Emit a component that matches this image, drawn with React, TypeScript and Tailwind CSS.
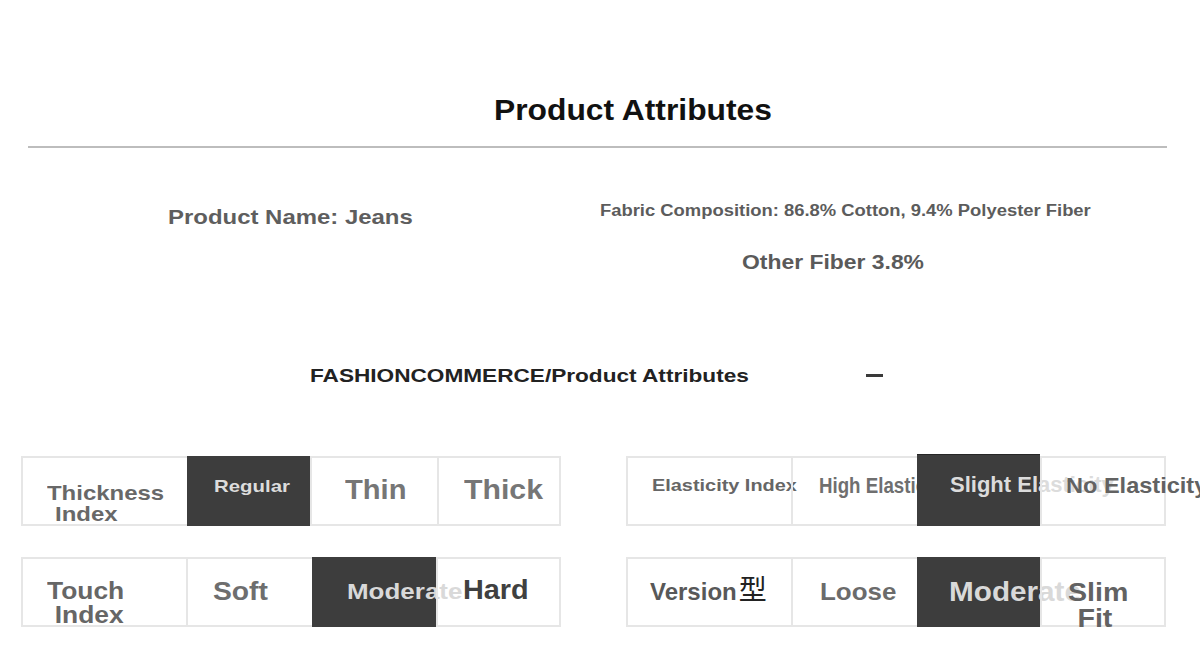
import React from "react"

function Cell({ className, children }: { className: string; children?: React.ReactNode }) {
  return <div className={"relative shrink-0 " + className}>{children}</div>
}

function Label({ className, children }: { className: string; children: React.ReactNode }) {
  return <div className={"w-fit whitespace-nowrap origin-left leading-none " + className}>{children}</div>
}

export default function App() {
  return (
    <div className="w-[1200px] h-[657px] overflow-hidden bg-white pt-[95px] font-['Liberation_Sans',Arial,sans-serif] font-bold">
      {/* heading */}
      <Label className="ml-[494px] text-[30px] scale-x-[1.06] text-[#111]">Product Attributes</Label>
      <div className="ml-[28px] mt-[21px] h-[2px] w-[1139px] bg-[#bdbdbd]" />

      {/* name / composition */}
      <div className="flex">
        <div className="w-[600px] shrink-0">
          <Label className="ml-[168px] mt-[58px] text-[21px] scale-x-[1.14] text-[#5e5e5e]">Product Name: Jeans</Label>
        </div>
        <div className="flex flex-col">
          <Label className="mt-[55px] text-[16px] scale-x-[1.15] text-[#5c5c5c]">
            Fabric Composition: 86.8% Cotton, 9.4% Polyester Fiber
          </Label>
          <Label className="ml-[142px] mt-[33px] text-[20px] scale-x-[1.145] text-[#5a5a5a]">Other Fiber 3.8%</Label>
        </div>
      </div>

      {/* section header */}
      <div className="flex items-center mt-[94px]">
        <div className="ml-[310px] w-[556px] shrink-0">
          <Label className="text-[19px] scale-x-[1.19] text-[#222]">FASHIONCOMMERCE/Product Attributes</Label>
        </div>
        <div className="h-[3px] w-[17px] bg-[#3a3a3a]" />
      </div>

      {/* attribute tables */}
      <div className="ml-[21px] mt-[71px] flex gap-[65px]">
        <div className="flex h-[70px] w-[540px] shrink-0 border-2 border-[#e6e6e6]">
          <Cell className="w-[164px]">
            <Label className="ml-[24px] mt-[24px] text-[21px] leading-[19px] scale-x-[1.14] text-[#686868]">
              <div>Thickness</div>
              <div className="ml-[7px]">Index</div>
            </Label>
          </Cell>
          <Cell className="w-[123px] -my-[2px] bg-[#3d3d3d]">
            <Label className="ml-[27px] mt-[22px] text-[17px] scale-x-[1.2] text-[#dcdcdc]">Regular</Label>
          </Cell>
          <Cell className="w-[127px] border-l-2 border-[#e6e6e6]">
            <Label className="ml-[33px] mt-[18px] text-[28px] scale-x-[1.04] text-[#767676]">Thin</Label>
          </Cell>
          <Cell className="w-[122px] border-l-2 border-[#e6e6e6]">
            <Label className="ml-[25px] mt-[18px] text-[28px] scale-x-[1.08] text-[#767676]">Thick</Label>
          </Cell>
        </div>

        <div className="flex h-[70px] w-[540px] shrink-0 border-2 border-[#e6e6e6]">
          <Cell className="w-[163px]">
            <Label className="ml-[24px] mt-[19px] text-[17px] scale-x-[1.17] text-[#666]">Elasticity Index</Label>
          </Cell>
          <Cell className="w-[126px] border-l-2 border-[#e6e6e6]">
            <Label className="ml-[26px] mt-[17px] text-[22px] scale-x-[0.85] text-[#6f6f6f]">High Elasticity</Label>
          </Cell>
          <Cell className="w-[123px] -mt-[4px] -mb-[2px] border-t border-[#262626] bg-[#3d3d3d]">
            <Label className="ml-[33px] mt-[19px] text-[22px] text-[#dcdcdc]">Slight Elasticity</Label>
          </Cell>
          <Cell className="w-[124px] border-l-2 border-[#e6e6e6]">
            <Label className="ml-[24px] mt-[17px] text-[22px] scale-x-[1.07] text-[#626262]">No Elasticity</Label>
          </Cell>
        </div>
      </div>

      <div className="ml-[21px] mt-[31px] flex gap-[65px]">
        <div className="flex h-[70px] w-[540px] shrink-0 border-2 border-[#e6e6e6]">
          <Cell className="w-[163px]">
            <Label className="ml-[24px] mt-[20px] text-[24px] leading-[24px] scale-x-[1.1] text-[#666]">
              <div>Touch</div>
              <div className="ml-[7px]">Index</div>
            </Label>
          </Cell>
          <Cell className="w-[126px] border-l-2 border-[#e6e6e6]">
            <Label className="ml-[25px] mt-[20px] text-[25px] scale-x-[1.13] text-[#6e6e6e]">Soft</Label>
          </Cell>
          <Cell className="w-[124px] -my-[2px] bg-[#3d3d3d]">
            <Label className="ml-[35px] mt-[24px] text-[22px] scale-x-[1.18] text-[#d9d9d9]">Moderate</Label>
          </Cell>
          <Cell className="w-[123px] border-l-2 border-[#e6e6e6]">
            <Label className="ml-[25px] mt-[17px] text-[28px] scale-x-[1.03] text-[#404040]">Hard</Label>
          </Cell>
        </div>

        <div className="flex h-[70px] w-[540px] shrink-0 border-2 border-[#e6e6e6]">
          <Cell className="w-[163px]">
            <Label className="ml-[22px] mt-[21px] text-[24px] text-[#585858]">
              Version
              <span className="ml-[2px] font-['Noto_Sans_CJK_SC',sans-serif] font-normal text-[28px] leading-[0] text-[#222]">型</span>
            </Label>
          </Cell>
          <Cell className="w-[126px] border-l-2 border-[#e6e6e6]">
            <Label className="ml-[27px] mt-[21px] text-[24px] scale-x-[1.08] text-[#6b6b6b]">Loose</Label>
          </Cell>
          <Cell className="w-[123px] -my-[2px] bg-[#3d3d3d]">
            <Label className="ml-[32px] mt-[22px] text-[27px] scale-x-[1.1] text-[#d9d9d9]">Moderate</Label>
          </Cell>
          <Cell className="w-[124px] border-l-2 border-[#e6e6e6]">
            <Label className="ml-[26px] mt-[20px] text-center text-[26px] leading-[25px] scale-x-[1.1] text-[#626262]">
              <div>Slim</div>
              <div className="-ml-[6px]">Fit</div>
            </Label>
          </Cell>
        </div>
      </div>
    </div>
  )
}
